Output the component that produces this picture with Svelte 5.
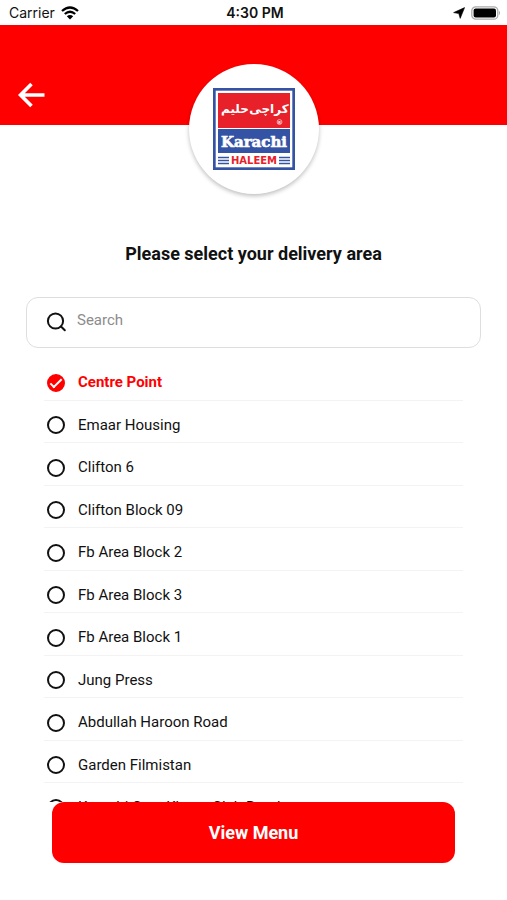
<script lang="ts">
	const areas = [
		'Centre Point',
		'Emaar Housing',
		'Clifton 6',
		'Clifton Block 09',
		'Fb Area Block 2',
		'Fb Area Block 3',
		'Fb Area Block 1',
		'Jung Press',
		'Abdullah Haroon Road',
		'Garden Filmistan',
		'Karachi Gym Khana Club Road'
	];

	let selected = $state('Centre Point');
	let search = $state('');

	let visible = $derived(
		areas.filter((area) => area.toLowerCase().includes(search.trim().toLowerCase()))
	);
</script>

<svelte:head>
	<title>Delivery area</title>
</svelte:head>

<div class="screen">
	<div class="status-bar">
		<div class="carrier">
			<span>Carrier</span>
			<svg width="18" height="14" viewBox="0 0 18 14" aria-hidden="true">
				<g fill="none" stroke="#000" stroke-width="2.3">
					<path d="M1 5 Q9 -2 17 5" />
					<path d="M3.8 8 Q9 3.4 14.2 8" />
				</g>
				<path d="M9 13.6 L5.8 10.3 Q9 7.7 12.2 10.3 Z" fill="#000" />
			</svg>
		</div>
		<span class="time">4:30 PM</span>
		<div class="indicators">
			<svg width="12" height="12" viewBox="0 0 12 12" aria-hidden="true">
				<path d="M11.6 0.6 L7.2 11.4 L5.8 6.6 L0.6 5.6 Z" fill="#000" stroke="#000" stroke-width="0.6" />
			</svg>
			<svg width="30" height="14" viewBox="0 0 30 14" aria-hidden="true">
				<rect x="0.8" y="0.8" width="26" height="12.4" rx="4" fill="#fff" stroke="#aaa" stroke-width="1.3" />
				<rect x="2.6" y="2.6" width="22.4" height="8.8" rx="2" fill="#000" />
				<path d="M28 4.8 Q30 7 28 9.2 Z" fill="#aaa" />
			</svg>
		</div>
	</div>

	<header class="banner">
		<button class="back" type="button" aria-label="Back">
			<svg width="28" height="26" viewBox="0 0 28 26" aria-hidden="true">
				<path
					d="M26.5 13 H3 M13.5 2 L2.5 13 L13.5 24"
					fill="none"
					stroke="#fff"
					stroke-width="3.6"
				/>
			</svg>
		</button>
		<div class="logo">
			<svg width="82" height="82" viewBox="0 0 82 82" role="img" aria-label="Karachi Haleem">
				<rect width="82" height="82" fill="#3553a4" />
				<rect x="2.7" y="2.7" width="76.6" height="76.6" fill="#fff" />
				<rect x="5" y="5" width="72" height="35" fill="#e8202a" />
				<rect x="5" y="41" width="72" height="24" fill="#3553a4" />
				<text class="urdu" x="56" y="25" direction="rtl">کراچی</text>
				<text class="urdu" x="22" y="25" direction="rtl">حلیم</text>
				<circle cx="66.5" cy="34" r="2.4" fill="none" stroke="#fff" stroke-width="0.6" />
				<text class="mark" x="66.5" y="35.5">R</text>
				<text class="karachi" x="41" y="59">Karachi</text>
				<path
					d="M5 69.5 H16 M5 72.5 H16 M5 75.5 H16 M66 69.5 H77 M66 72.5 H77 M66 75.5 H77"
					stroke="#3553a4"
					stroke-width="1.5"
				/>
				<text class="haleem" x="41" y="76">HALEEM</text>
			</svg>
		</div>
	</header>

	<main>
		<h1>Please select your delivery area</h1>

		<label class="search">
			<svg width="20" height="20" viewBox="0 0 20 20" aria-hidden="true">
				<circle cx="8.5" cy="8" r="7.6" />
				<path d="M14 13.5 L17.8 17.3" />
			</svg>
			<input type="text" placeholder="Search" aria-label="Search" bind:value={search} />
		</label>

		<div class="list-wrap">
			<ul class="areas">
				{#each visible as area}
					<li>
						<label class="area" class:active={selected === area}>
							<input type="radio" name="area" value={area} bind:group={selected} />
							<span>{area}</span>
						</label>
					</li>
				{/each}
			</ul>
		</div>
	</main>

	<footer>
		<button class="view-menu" type="button">View Menu</button>
	</footer>
</div>

<style>
	:global(body) {
		background: #fff;
	}

	.screen {
		display: flex;
		flex-direction: column;
		height: 100vh;
		font-family: Roboto, 'Liberation Sans', sans-serif;
		color: #111;
	}

	.status-bar {
		display: grid;
		grid-template-columns: 1fr auto 1fr;
		align-items: center;
		flex: none;
		height: 25px;
		padding: 0 6px 0 9px;
		font-family: Inter, 'Liberation Sans', sans-serif;
		font-size: 14px;
		line-height: 24px;
	}

	.carrier,
	.indicators {
		display: flex;
		align-items: center;
		gap: 6px;
	}

	.indicators {
		justify-content: flex-end;
	}

	.time {
		font-weight: 600;
	}

	.banner {
		position: relative;
		flex: none;
		height: 100px;
		background: #f00;
	}

	.back {
		display: flex;
		margin: 0 0 0 18px;
		padding: 57px 0 0;
		border: 0;
		background: none;
		cursor: pointer;
	}

	/* hangs over the lower edge of the banner */
	.logo {
		position: absolute;
		top: 39px;
		left: 50%;
		display: grid;
		place-items: center;
		width: 130px;
		height: 130px;
		border-radius: 50%;
		background: #fff;
		box-shadow: 0 2px 4px rgba(0, 0, 0, 0.25);
		transform: translateX(-50%);
	}

	.logo text {
		text-anchor: middle;
		font-weight: 700;
		fill: #fff;
	}

	.logo .urdu {
		font-family: 'DejaVu Sans', sans-serif;
		font-size: 12px;
	}

	.logo .mark {
		font-size: 4px;
	}

	.logo .karachi {
		font-family: 'DejaVu Serif', serif;
		font-size: 15px;
		stroke: #fff;
		stroke-width: 0.6px;
	}

	.logo .haleem {
		font-family: 'DejaVu Sans', sans-serif;
		font-size: 10px;
		fill: #e8202a;
	}

	main {
		display: flex;
		flex-direction: column;
		flex: 1;
		min-height: 0;
		padding: 116px 26px 0;
	}

	h1 {
		margin: 0;
		font-size: 18px;
		line-height: 26px;
		font-weight: 700;
		text-align: center;
	}

	.search {
		display: flex;
		align-items: center;
		flex: none;
		gap: 10px;
		box-sizing: border-box;
		height: 51px;
		margin-top: 30px;
		padding: 0 20px;
		border: 1px solid #dedede;
		border-radius: 12px;
	}

	.search svg {
		fill: none;
		stroke: #111;
		stroke-width: 2;
		stroke-linecap: round;
		overflow: visible;
	}

	.search input {
		flex: 1;
		min-width: 0;
		padding: 0 0 6px;
		border: 0;
		outline: 0;
		background: none;
		font: inherit;
		font-size: 15px;
		color: inherit;
	}

	.search input::placeholder {
		color: #8c8c8c;
	}

	.list-wrap {
		flex: 1;
		min-height: 0;
		margin: 10px 18px 0;
		overflow-y: auto;
		scrollbar-width: none;
	}

	.areas {
		display: grid;
		grid-auto-rows: 1fr;
		min-height: 468px;
		margin: 0;
		padding: 0;
		list-style: none;
	}

	.areas li {
		border-bottom: 1px solid #f3f3f3;
	}

	.area {
		display: flex;
		align-items: center;
		gap: 13px;
		padding: 14px 3px 6px;
		font-size: 15px;
		line-height: 21px;
		cursor: pointer;
	}

	.area input {
		position: relative;
		flex: none;
		box-sizing: border-box;
		width: 18px;
		height: 18px;
		margin: 0;
		border: 2px solid #111;
		border-radius: 50%;
		appearance: none;
	}

	.area.active {
		font-weight: 700;
		color: #f00;
	}

	.area.active input {
		border-color: #f00;
		background: #f00;
	}

	.area.active input::after {
		content: '';
		position: absolute;
		top: 3px;
		left: 1px;
		width: 12px;
		height: 6px;
		border: solid #fff;
		border-width: 0 0 2px 2px;
		box-sizing: border-box;
		transform: rotate(-45deg);
	}

	footer {
		flex: none;
		padding: 0 52px 37px;
	}

	.view-menu {
		display: block;
		width: 100%;
		height: 61px;
		border: 0;
		border-radius: 12px;
		background: #f00;
		font: inherit;
		font-size: 18px;
		font-weight: 700;
		color: #fff;
		cursor: pointer;
	}
</style>
